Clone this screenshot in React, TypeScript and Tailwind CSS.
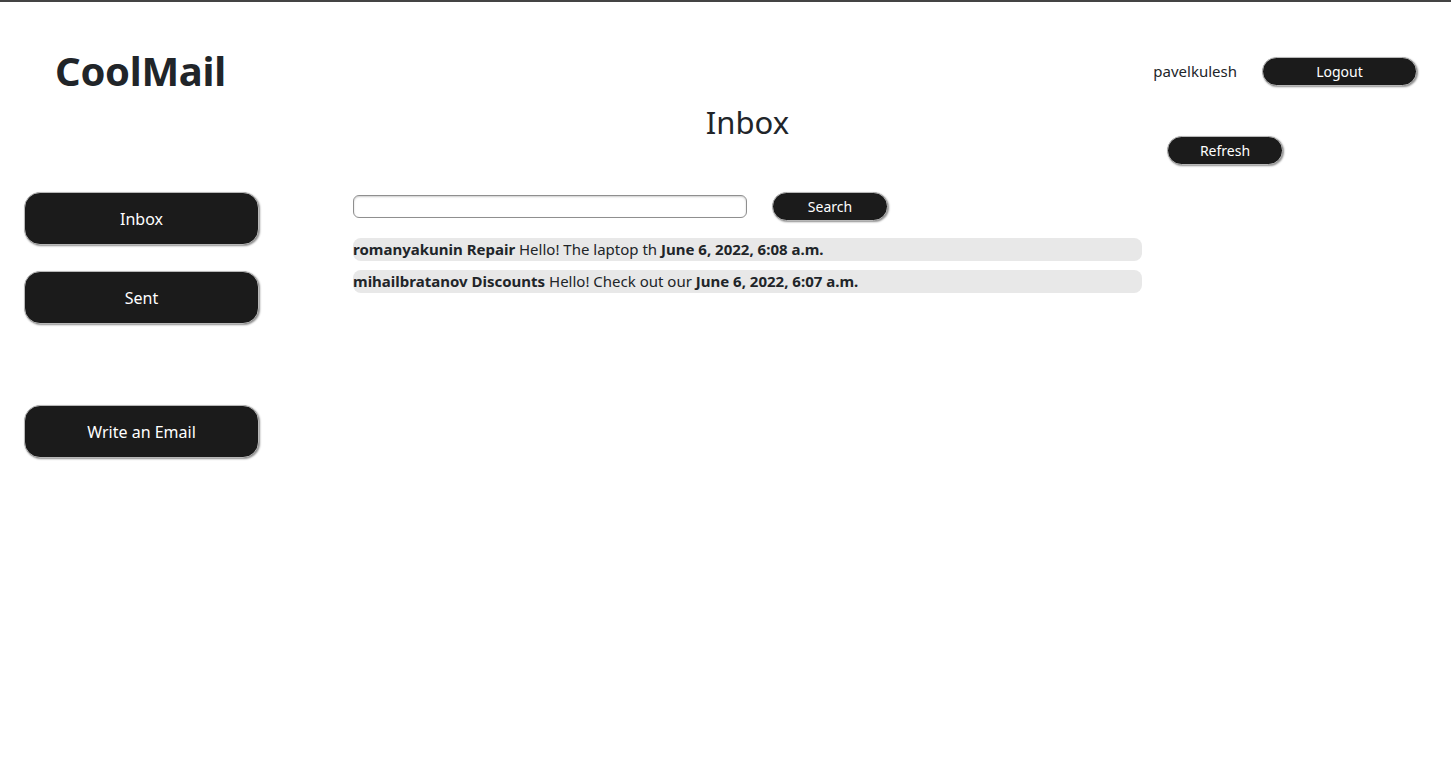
import React from "react";

const emails = [
    { from: "romanyakunin", subject: "Repair", preview: "Hello! The laptop th", date: "June 6, 2022, 6:08 a.m." },
    { from: "mihailbratanov", subject: "Discounts", preview: "Hello! Check out our", date: "June 6, 2022, 6:07 a.m." },
];

function SideButton({ label }: { label: string }) {
    return (
        <button className="w-[235px] h-[53px] rounded-[16px] bg-[#1b1b1b] text-white text-[16px] border border-[#b8b8b8] shadow-[1px_1px_2px_rgba(0,0,0,0.45)]">
            {label}
        </button>
    );
}

function PillButton({ label, width }: { label: string; width: string }) {
    return (
        <button className={`${width} h-[29px] rounded-full bg-[#1b1b1b] text-white text-[14px] border border-[#b8b8b8] shadow-[1px_1px_2px_rgba(0,0,0,0.45)]`}>
            {label}
        </button>
    );
}

export default function App() {
    return (
        <div className="min-h-[758px] bg-white text-[#212529] border-t-2 border-[#444]" style={{ fontFamily: '"Noto Sans", sans-serif' }}>
            <header className="flex items-center justify-between h-[56px] mt-[41px] pl-[55px] pr-[34px]">
                <h1 className="text-[40px] font-bold leading-none tracking-[-0.3px]">CoolMail</h1>
                <div className="flex items-center gap-[25px]">
                    <span className="text-[15px]">pavelkulesh</span>
                    <PillButton label="Logout" width="w-[155px]" />
                </div>
            </header>

            <div className="flex">
                <aside className="w-[353px] pl-[24px] pt-[93px] flex flex-col">
                    <SideButton label="Inbox" />
                    <div className="mt-[26px]">
                        <SideButton label="Sent" />
                    </div>
                    <div className="mt-[81px]">
                        <SideButton label="Write an Email" />
                    </div>
                </aside>

                <main className="w-[789px]">
                    <h2 className="mt-[4px] h-[38px] leading-[38px] text-[31px] text-center">Inbox</h2>
                    <div className="mt-[51px] h-[29px] flex items-center gap-[25px]">
                        <input className="w-[394px] h-[23px] rounded-[6px] border border-[#8f8f8f] shadow-[inset_0_1px_2px_rgba(0,0,0,0.2)] px-2 outline-none" />
                        <PillButton label="Search" width="w-[116px]" />
                    </div>
                    <div className="mt-[17px] flex flex-col gap-[9px]">
                        {emails.map((e) => (
                            <div key={e.date} className="h-[23px] rounded-[8px] bg-[#e8e8e8] flex items-center text-[15px] whitespace-nowrap">
                                <b>{e.from} {e.subject}</b>&nbsp;{e.preview}&nbsp;<b>{e.date}</b>
                            </div>
                        ))}
                    </div>
                </main>

                <div className="pl-[25px] pt-[37px]">
                    <PillButton label="Refresh" width="w-[116px]" />
                </div>
            </div>
        </div>
    );
}
